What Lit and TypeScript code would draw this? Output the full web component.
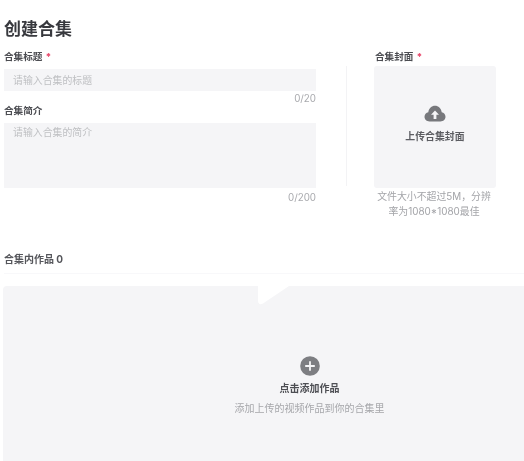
import { LitElement, html, css } from "lit";
import { customElement } from "lit/decorators.js";

@customElement("app-root")
export class AppRoot extends LitElement {
  static styles = css`
    :host {
      display: block;
      width: 524px;
      height: 461px;
      overflow: hidden;
      background: #fff;
      font-family: "Inter", "Noto Sans CJK SC", sans-serif;
      color: #3a3b40;
    }
    .page {
      width: 524px;
      height: 461px;
      box-sizing: border-box;
      padding: 18px 0 0 4px;
      display: flex;
      flex-direction: column;
      filter: blur(0.7px);
    }
    h1 {
      margin: 0;
      font-size: 17px;
      line-height: 22px;
      font-weight: 700;
      color: #38393e;
    }
    .form {
      display: flex;
      margin-top: 10px;
      height: 169px;
    }
    .left {
      width: 312px;
      display: flex;
      flex-direction: column;
    }
    .label {
      font-size: 9.6px;
      line-height: 14px;
      font-weight: 700;
      color: #4c4d52;
    }
    .req {
      color: #e8476a;
      margin-left: 1px;
    }
    .field {
      margin-top: 5px;
      background: #f5f5f7;
      box-sizing: border-box;
      padding: 0 9px;
      font-size: 9.9px;
      color: #bfc0c3;
    }
    .single {
      height: 22px;
      line-height: 22px;
    }
    .multi {
      height: 65px;
      line-height: 18px;
    }
    .count {
      font-size: 9.8px;
      line-height: 13px;
      text-align: right;
      color: #a9aaae;
    }
    .after-single {
      padding-top: 1px;
      height: 12px;
      line-height: 13px;
    }
    .after-multi {
      margin-top: 3px;
    }
    .divider {
      width: 1px;
      height: 120px;
      margin: 16px 0 0 30px;
      background: #f3f3f5;
    }
    .right {
      margin-left: 27px;
      width: 122px;
      display: flex;
      flex-direction: column;
    }
    .right .label {
      padding-left: 1px;
    }
    .cover {
      flex: none;
      margin-top: 2px;
      height: 122px;
      border-radius: 3px;
      background: #f5f5f7;
      display: flex;
      flex-direction: column;
      align-items: center;
      justify-content: center;
      font-size: 9.9px;
      font-weight: 700;
      color: #5c5d62;
    }
    .cover svg {
      display: block;
      margin-top: -6px;
      margin-bottom: 7px;
    }
    .hint {
      flex: none;
      margin-top: 1px;
      font-size: 9.9px;
      line-height: 15px;
      color: #a3a4a8;
      text-align: center;
      white-space: nowrap;
      transform: translateX(-1px);
    }
    .works {
      margin-top: 33px;
      font-size: 10px;
      line-height: 14px;
      font-weight: 700;
      color: #55565b;
    }
    .rule {
      margin-top: 7px;
      height: 1px;
      background: #f8f8fa;
    }
    .panel {
      position: relative;
      margin: 12px 0 0 -1px;
      width: 613px;
      flex: 1;
      background: #f5f5f7;
      border-radius: 4px 0 0 0;
      display: flex;
      flex-direction: column;
      align-items: center;
      padding-top: 70px;
    }
    .panel svg.plus {
      display: block;
    }
    .notch {
      position: absolute;
      left: 252px;
      top: 0;
    }
    .add {
      margin-top: 5px;
      font-size: 10px;
      line-height: 14px;
      font-weight: 700;
      color: #4e4f54;
    }
    .sub {
      margin-top: 6px;
      font-size: 10px;
      line-height: 14px;
      color: #a6a7ab;
    }
  `;

  render() {
    return html`
      <div class="page">
        <h1>创建合集</h1>
        <div class="form">
          <div class="left">
            <div class="label">合集标题<span class="req"> *</span></div>
            <div class="field single">请输入合集的标题</div>
            <div class="count after-single">0/20</div>
            <div class="label">合集简介</div>
            <div class="field multi">请输入合集的简介</div>
            <div class="count after-multi">0/200</div>
          </div>
          <div class="divider"></div>
          <div class="right">
            <div class="label">合集封面<span class="req"> *</span></div>
            <div class="cover">
              <svg width="22" height="17" viewBox="0 0 22 17">
                <path
                  fill="#77787c"
                  d="M5.500 16.500C2.600 16.500.5 14.400.5 11.800c0-2.300 1.600-4.200 3.800-4.600C4.900 3.400 7.600.8 11 .8s6.100 2.600 6.700 6.400c2.200.4 3.800 2.300 3.800 4.600 0 2.600-2.100 4.700-5 4.700z"
                />
                <path fill="#f5f5f7" d="M11 5.500l4 4.300h-2.600v4.200H9.600V9.800H7z" />
              </svg>
              上传合集封面
            </div>
            <div class="hint">文件大小不超过5M，分辨<br />率为1080*1080最佳</div>
          </div>
        </div>
        <div class="works">合集内作品 0</div>
        <div class="rule"></div>
        <div class="panel">
          <svg class="notch" width="34" height="19" viewBox="0 0 34 19">
            <path fill="#fff" d="M3 0h31L8 17.500C5.500 19 3 18 3 15z" />
          </svg>
          <svg class="plus" width="20" height="20" viewBox="0 0 20 20">
            <circle cx="10" cy="10" r="9.800" fill="#7d7e82" />
            <path stroke="#f5f5f7" stroke-width="1.800" d="M10 5.200v9.600M5.200 10h9.600" />
          </svg>
          <div class="add">点击添加作品</div>
          <div class="sub">添加上传的视频作品到你的合集里</div>
        </div>
      </div>
    `;
  }
}
